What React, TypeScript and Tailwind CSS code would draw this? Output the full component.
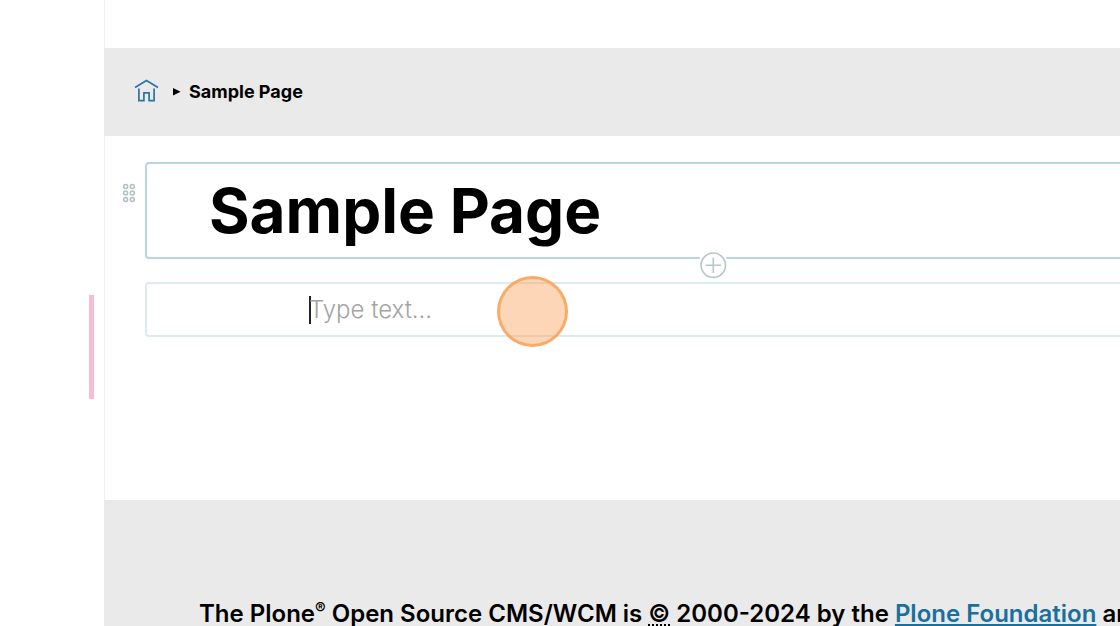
function HomeIcon() {
  return (
    <svg width="26" height="24" viewBox="0 0 26 24" fill="none" stroke="#2a74a3" strokeWidth="1.7" aria-hidden="true">
      <path d="M1 8.5 12.5 1.5 24 8.5" />
      <path d="M4.9 9.5v12.2h5v-7.9h5.2v7.9h5V9.5" />
    </svg>
  );
}

function DragIcon() {
  return (
    <svg width="14" height="20" viewBox="0 0 14 20" fill="none" stroke="#b0c0c2" strokeWidth="1.5" aria-hidden="true">
      <circle cx="3.6" cy="3.4" r="2" />
      <circle cx="10.3" cy="3.4" r="2" />
      <circle cx="3.6" cy="9.9" r="2" />
      <circle cx="10.3" cy="9.9" r="2" />
      <circle cx="3.6" cy="16.4" r="2" />
      <circle cx="10.3" cy="16.4" r="2" />
    </svg>
  );
}

function AddIcon() {
  return (
    <svg width="30" height="30" viewBox="0 0 30 30" fill="none" stroke="#b8c6c8" strokeWidth="1.6" aria-hidden="true">
      <circle cx="15.3" cy="15.2" r="12.2" />
      <path d="M15.3 7.4V23M7.5 15.2h15.6" />
    </svg>
  );
}

export default function App() {
  return (
    <div className="flex h-screen overflow-hidden bg-white font-['Inter',sans-serif] text-black">
      <aside className="relative w-[104px] shrink-0">
        <div className="absolute top-[295px] right-[10px] h-[104px] w-[5px] bg-[#f9bbd3]" />
      </aside>
      <div className="flex min-w-0 flex-1 flex-col">
        <header className="h-12 shrink-0 border-l border-[#edf1f2]" />
        <nav aria-label="Breadcrumb" className="flex h-[88px] shrink-0 items-center bg-[#eaeaea] pl-[30px]">
          <a href="#home" aria-label="Home" className="pb-0.5">
            <HomeIcon />
          </a>
          <svg width="8" height="10" viewBox="0 0 8 10" className="ml-[13px] mr-2" aria-hidden="true">
            <path d="M0 .9v7.6L7.6 4.7z" fill="#000" />
          </svg>
          <span className="text-lg font-bold">Sample Page</span>
        </nav>

        <main className="h-[364px] shrink-0 border-l border-[#edf1f2] pt-[26px]">
          <div className="flex">
            <button type="button" aria-label="Drag block" className="mt-[21px] mr-[9px] ml-[17px] self-start">
              <DragIcon />
            </button>
            <section className="relative h-[97px] min-w-0 flex-1 rounded-l border-2 border-r-0 border-[#b8d6de] pl-[62px]">
              <h1 className="text-[62px] leading-[94px] font-bold">Sample Page</h1>
              <button type="button" aria-label="Add block" className="absolute top-[86px] left-[551px] rounded-full bg-white">
                <AddIcon />
              </button>
            </section>
          </div>
          <section className="relative mt-[23px] ml-10 flex h-[55px] items-center rounded-l border-2 border-r-0 border-[#dcebee] pl-[162px]">
            <span className="h-7 w-0.5 shrink-0 bg-[#222]" />
            <input
              type="text"
              aria-label="Text"
              placeholder="Type text…"
              className="-ml-0.5 min-w-0 flex-1 bg-transparent text-2xl font-light outline-none placeholder:text-[#a3a3a3]"
            />
            <div className="absolute -top-2 left-[350px] size-[71px] rounded-full border-3 border-[#f8a65c]/90 bg-[#fba25f]/45" />
          </section>
        </main>

        <footer className="flex-1 bg-[#eaeaea] pt-24 pl-[95px]">
          <p className="text-2xl leading-9 font-semibold whitespace-nowrap">
            The Plone<sup className="text-base">®</sup> Open Source CMS/WCM is{" "}
            <abbr title="Copyright" className="underline decoration-dotted decoration-2 underline-offset-2">©</abbr> 2000-2024 by the{" "}
            <a href="#foundation" className="text-[#1a6f9f] underline decoration-2 underline-offset-2">Plone Foundation</a> and
          </p>
        </footer>
      </div>
    </div>
  );
}
